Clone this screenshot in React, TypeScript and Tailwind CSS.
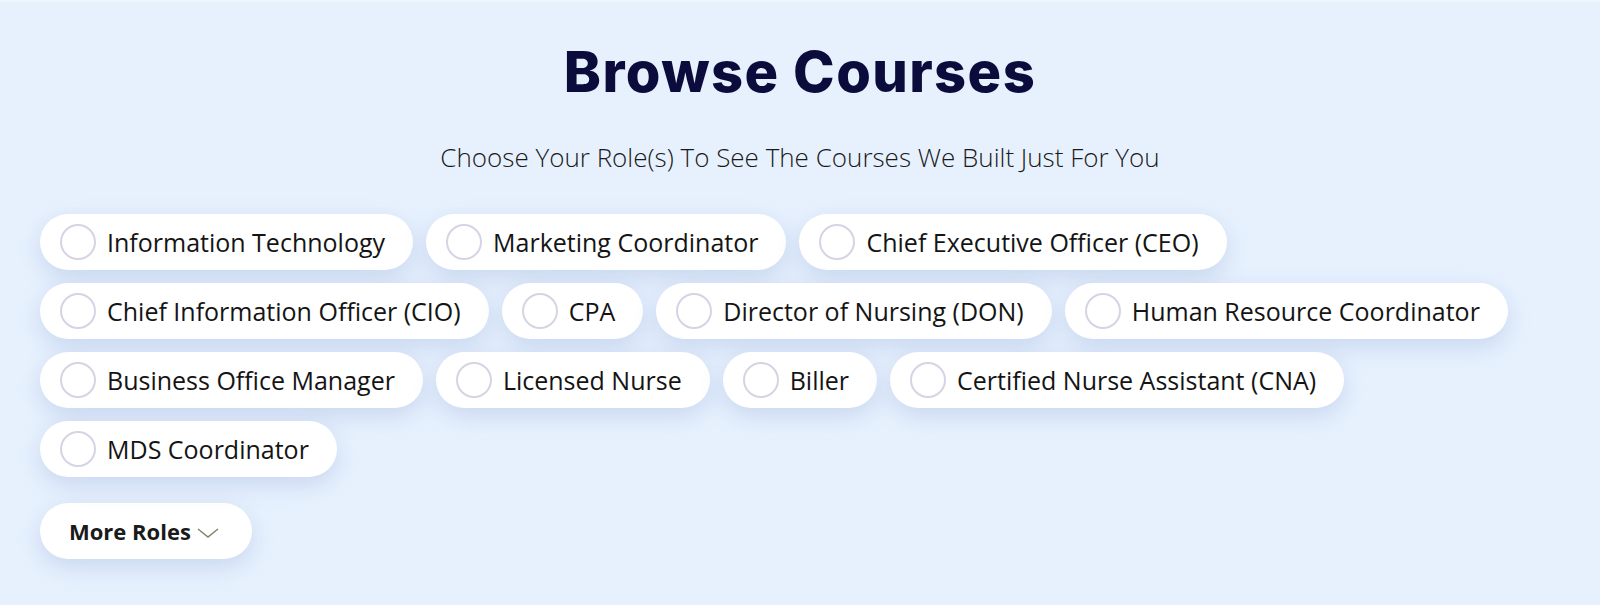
import React from "react";

const roles = [
  "Information Technology",
  "Marketing Coordinator",
  "Chief Executive Officer (CEO)",
  "Chief Information Officer (CIO)",
  "CPA",
  "Director of Nursing (DON)",
  "Human Resource Coordinator",
  "Business Office Manager",
  "Licensed Nurse",
  "Biller",
  "Certified Nurse Assistant (CNA)",
  "MDS Coordinator",
];

function Pill({ label }: { label: string }) {
  return (
    <div className="flex h-[56px] items-center rounded-full bg-white pl-[20px] pr-[28px] shadow-[0_8px_24px_rgba(80,115,180,0.20)]">
      <span className="block h-[36px] w-[36px] shrink-0 rounded-full border-[2.5px] border-[#d6d4e4]" />
      <span className="ml-[11px] whitespace-nowrap text-[25px] leading-[32px] text-[#141414]">
        {label}
      </span>
    </div>
  );
}

export default function App() {
  return (
    <div
      className="h-[605px] w-[1600px] overflow-hidden border-t-2 border-[#eff6fe] bg-[#e7f1fe]"
      style={{ fontFamily: '"Open Sans", "Liberation Sans", sans-serif' }}
    >
      <h1
        className="pt-[42px] text-center text-[56px] font-extrabold leading-[56px] tracking-[1.4px] text-[#0b0c3c]"
        style={{ fontFamily: 'Inter, "Liberation Sans", sans-serif' }}
      >
        Browse Courses
      </h1>
      <p className="mt-[41px] text-center text-[26px] font-light leading-[32px] text-[#1a1a1a]">
        Choose Your Role(s) To See The Courses We Built Just For You
      </p>
      <div className="mt-[41px] flex flex-wrap gap-[13px] px-10">
        {roles.map((r) => (
          <Pill key={r} label={r} />
        ))}
      </div>
      <div className="mt-[26px] px-10">
        <button className="flex h-[56px] items-center rounded-full bg-white pl-[29px] pr-[33px] shadow-[0_8px_24px_rgba(80,115,180,0.20)]">
          <span className="text-[22px] font-bold leading-[28px] text-[#1a1a1a]">More Roles</span>
          <svg
            className="ml-[6px] mt-[4px]"
            width="22"
            height="10"
            viewBox="0 0 22 10"
            fill="none"
            stroke="#8a836f"
            strokeWidth="1.6"
          >
            <path d="M1 1 L11 9 L21 1" />
          </svg>
        </button>
      </div>
    </div>
  );
}
